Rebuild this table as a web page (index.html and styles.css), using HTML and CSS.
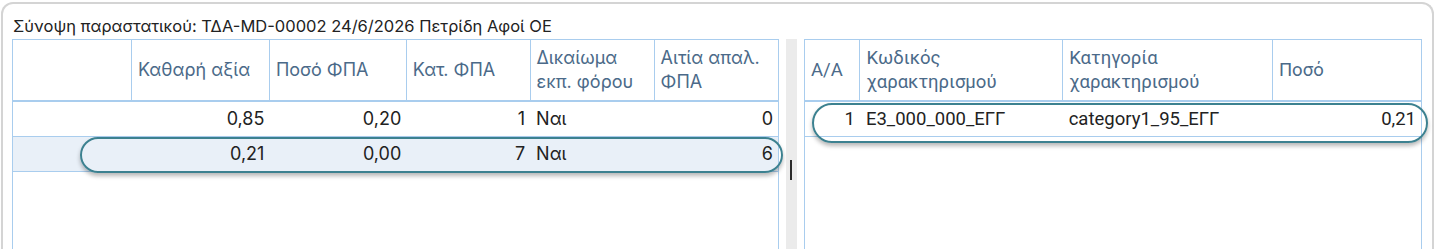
FILE: index.html
```html
<!DOCTYPE html>
<html lang="el">
<head>
  <meta charset="UTF-8">
  <meta name="viewport" content="width=device-width, initial-scale=1.0">
  <title>Σύνοψη παραστατικού</title>
  <link rel="stylesheet" href="styles.css">
</head>
<body>
  <div class="panel">
    <div class="panel-title">Σύνοψη παραστατικού: ΤΔΑ-MD-00002 24/6/2026 Πετρίδη Αφοί ΟΕ</div>

    <div class="split">
      <!-- VAT summary -->
      <div class="grid-wrap vat-grid">
        <table class="grid">
          <colgroup>
            <col style="width:119px">
            <col style="width:138px">
            <col style="width:137px">
            <col style="width:124px">
            <col style="width:124px">
            <col style="width:124px">
          </colgroup>
          <thead>
            <tr>
              <th></th>
              <th>Καθαρή αξία</th>
              <th>Ποσό ΦΠΑ</th>
              <th>Κατ. ΦΠΑ</th>
              <th>Δικαίωμα<br>εκπ. φόρου</th>
              <th>Αιτία απαλ.<br>ΦΠΑ</th>
            </tr>
          </thead>
          <tbody>
            <tr>
              <td></td>
              <td class="num">0,85</td>
              <td class="num">0,20</td>
              <td class="num">1</td>
              <td>Ναι</td>
              <td class="num">0</td>
            </tr>
            <tr class="selected">
              <td></td>
              <td class="num">0,21</td>
              <td class="num">0,00</td>
              <td class="num">7</td>
              <td>Ναι</td>
              <td class="num">6</td>
            </tr>
          </tbody>
        </table>
        <div class="mark mark-vat"></div>
      </div>

      <div class="splitter"><span class="splitter-caret"></span></div>

      <!-- income classifications -->
      <div class="grid-wrap class-grid">
        <table class="grid">
          <colgroup>
            <col style="width:55px">
            <col style="width:203px">
            <col style="width:210px">
            <col style="width:149px">
          </colgroup>
          <thead>
            <tr>
              <th>Α/Α</th>
              <th>Κωδικός<br>χαρακτηρισμού</th>
              <th>Κατηγορία<br>χαρακτηρισμού</th>
              <th>Ποσό</th>
            </tr>
          </thead>
          <tbody>
            <tr>
              <td class="num">1</td>
              <td>E3_000_000_ΕΓΓ</td>
              <td>category1_95_ΕΓΓ</td>
              <td class="num">0,21</td>
            </tr>
          </tbody>
        </table>
        <div class="mark mark-class"></div>
      </div>
    </div>
  </div>
</body>
</html>
```

FILE: styles.css
```css
body {
  margin: 0;
  background: #fff;
  font-family: Inter, "Noto Sans", sans-serif;
  color: #222;
}

.panel {
  margin: 2px 0 0 1px;
  width: 1429px;
  height: 260px;
  border: 2px solid #d4d4d4;
  border-bottom: none;
  border-radius: 12px 12px 0 0;
}

.panel-title {
  font-size: 16.5px;
  line-height: 20px;
  padding: 12px 0 0 10px;
  height: 23px;
}

.split {
  display: flex;
  align-items: stretch;
  height: 230px;
  padding-left: 9px;
}

.grid-wrap {
  position: relative;
  border: 1px solid #a9cdee;
  border-bottom: none;
}

.vat-grid {
  width: 765px;
}

.class-grid {
  width: 616px;
  font-family: Roboto, "Noto Sans", sans-serif;
}

.splitter {
  width: 11px;
  margin: 0 7px;
  background: #ebebeb;
  position: relative;
}

.splitter-caret {
  position: absolute;
  left: 4px;
  top: 121px;
  width: 2px;
  height: 20px;
  background: #2b2b2b;
}

.grid {
  border-collapse: collapse;
  table-layout: fixed;
  font-size: 18px;
}

.class-grid .grid {
  font-size: 18.5px;
}

.grid th,
.grid td {
  border-bottom: 1px solid #a9cdee;
  padding: 0 5px 0 6px;
  white-space: nowrap;
  overflow: hidden;
}

.grid th {
  height: 60px;
  text-align: left;
  font-weight: normal;
  color: #4b6a89;
  line-height: 24px;
  border-right: 1px solid #a9cdee;
  border-bottom-width: 2px;
}

.grid th:last-child {
  border-right: none;
}

.grid td {
  height: 34px;
  line-height: 20px;
}

.grid td.num {
  text-align: right;
}

.grid tr.selected td {
  background: #e9f0f8;
}

/* highlight rings drawn over the rows */
.mark {
  position: absolute;
  border: 2px solid #3c8190;
  border-radius: 20px;
  box-shadow: 0 3px 4px rgba(0, 0, 0, 0.28);
  box-sizing: border-box;
  pointer-events: none;
}

.mark-vat {
  left: 67px;
  top: 97px;
  width: 703px;
  height: 36px;
}

.mark-class {
  left: 7px;
  top: 63px;
  width: 616px;
  height: 40px;
}
```
